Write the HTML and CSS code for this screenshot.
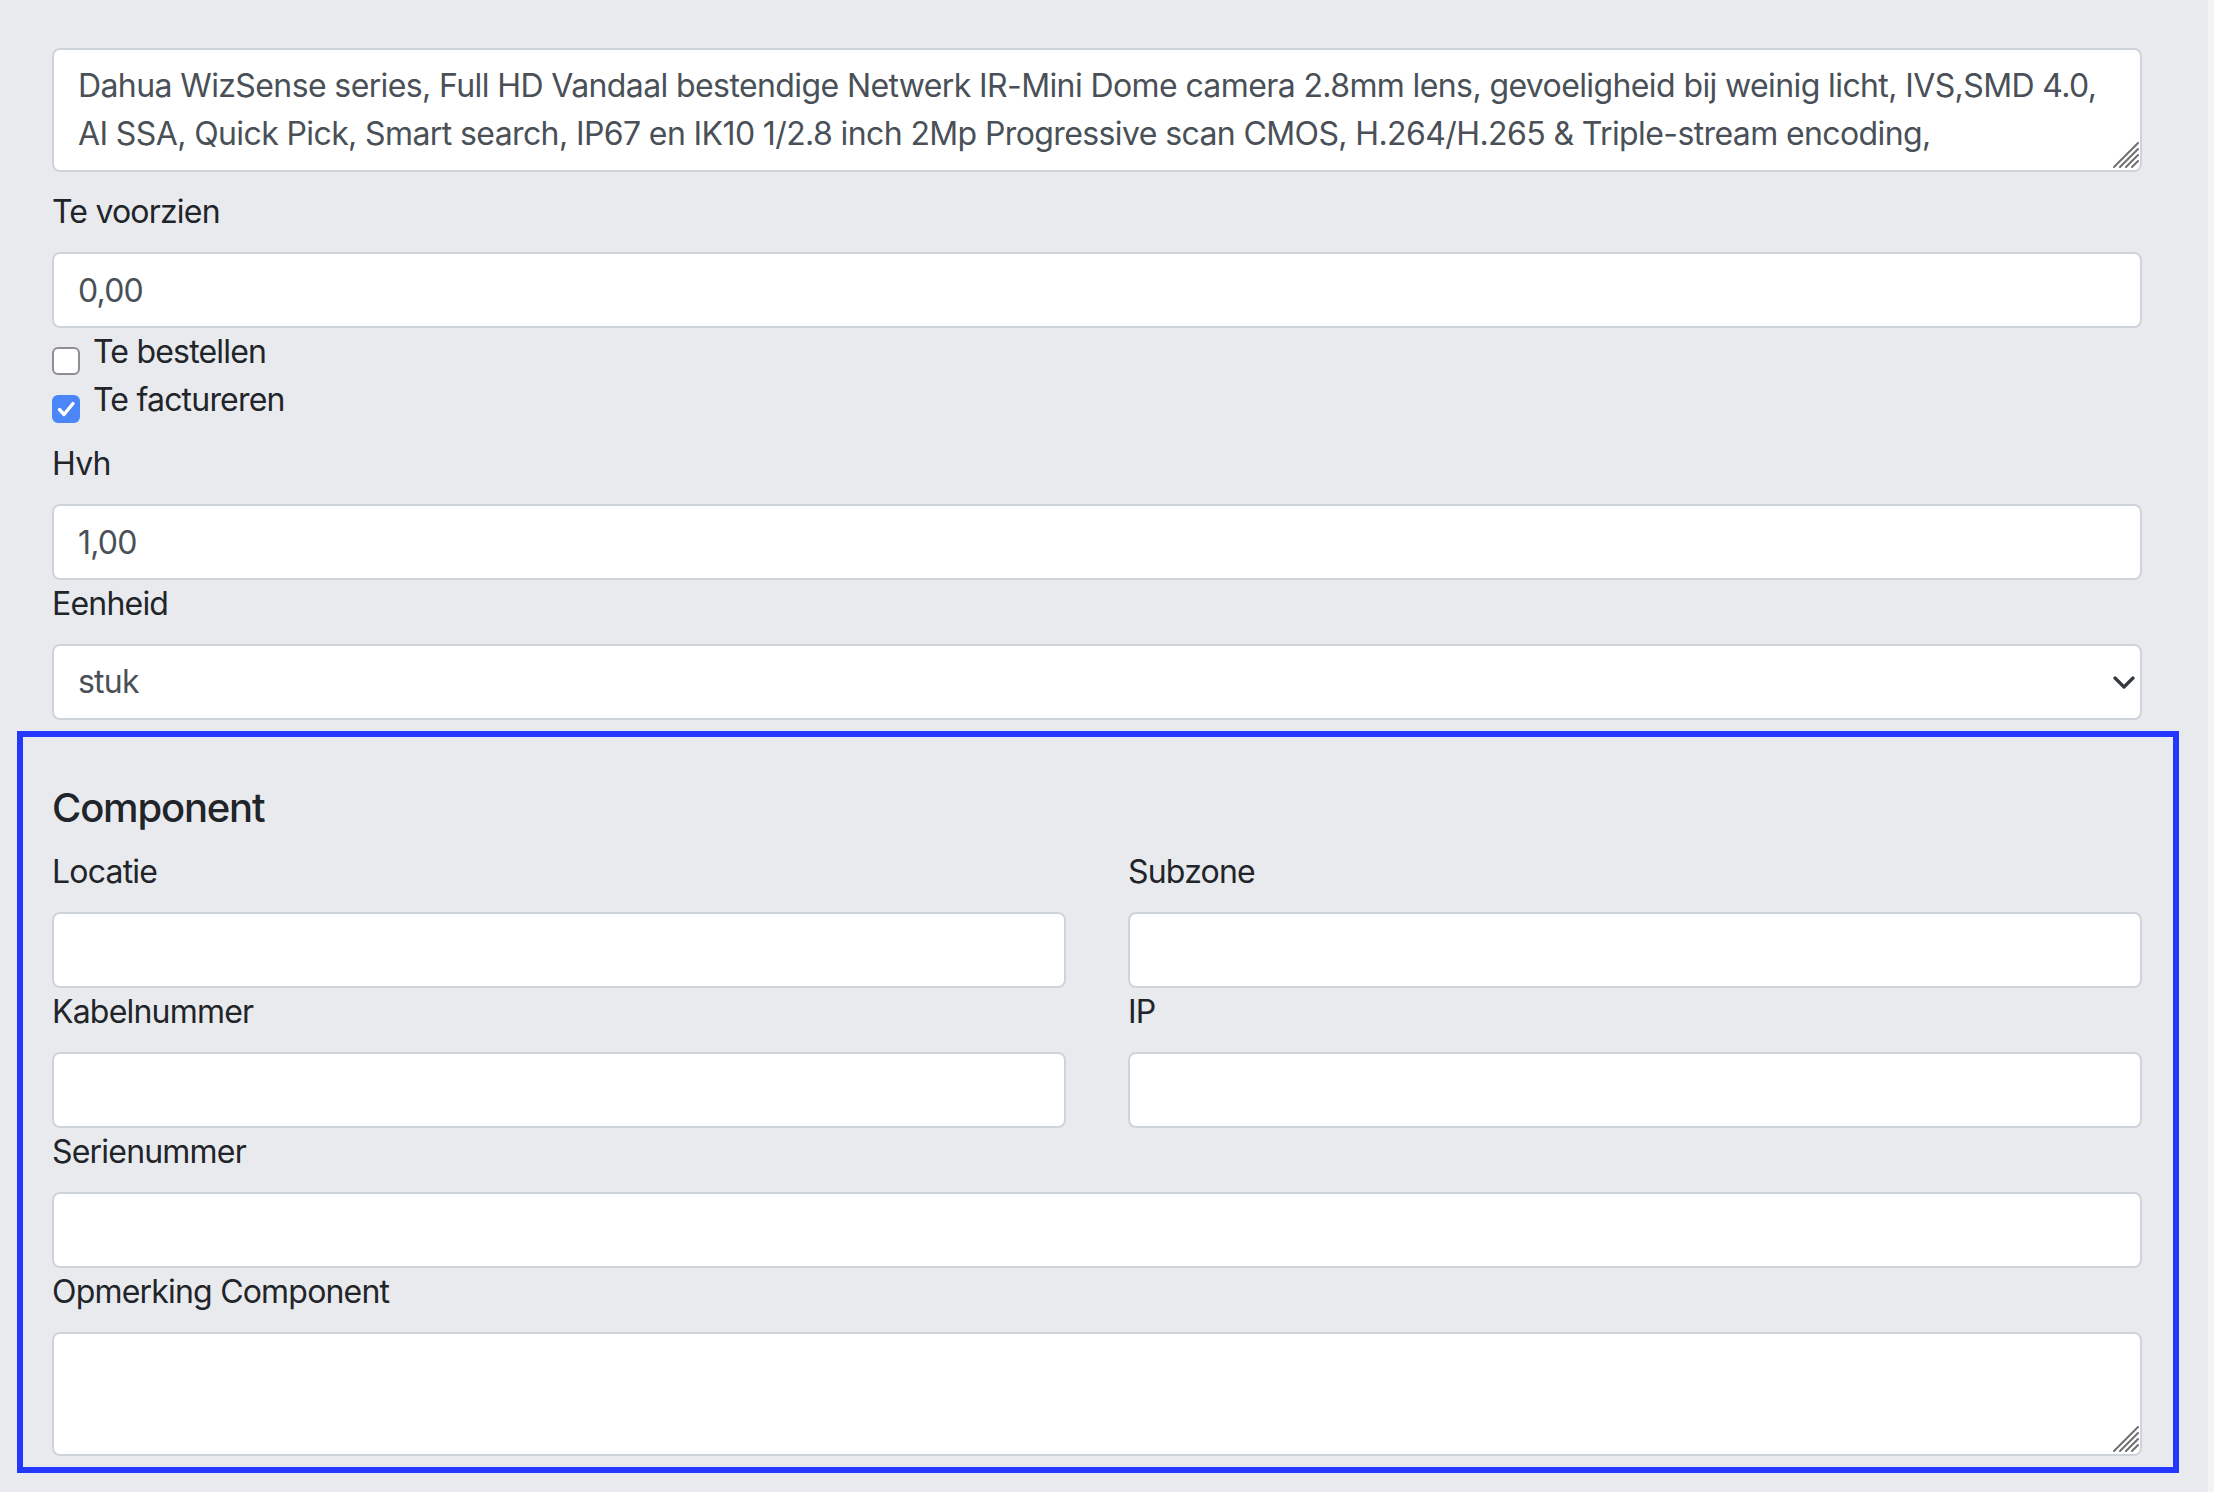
FILE: index.html
```html
<!DOCTYPE html>
<html lang="nl">
<head>
    <meta charset="UTF-8">
    <meta name="viewport" content="width=device-width, initial-scale=1.0">
    <title>Artikel bewerken</title>
    <link rel="stylesheet" href="styles.css">
</head>
<body>
    <div class="page">
        <form class="item-form">
            <div class="fields">
                <div class="textarea-wrap description">
                    <textarea class="form-control" rows="2">Dahua WizSense series, Full HD Vandaal bestendige Netwerk IR-Mini Dome camera 2.8mm lens, gevoeligheid bij weinig licht, IVS,SMD 4.0, AI SSA, Quick Pick, Smart search, IP67 en IK10 1/2.8 inch 2Mp Progressive scan CMOS, H.264/H.265 &amp; Triple-stream encoding,</textarea>
                    <svg class="grip" viewBox="0 0 26 26" width="26" height="26"><path d="M1 25L25 1M7 25L25 7M13 25L25 13M19 25L25 19" stroke="#707070" stroke-width="2" stroke-linecap="round"/></svg>
                </div>

                <label class="form-label" for="te-voorzien">Te voorzien</label>
                <input class="form-control" id="te-voorzien" type="text" value="0,00">

                <div class="checks">
                    <label class="form-check">
                        <input type="checkbox" class="check-input">
                        <span class="check-box"></span>
                        <span>Te bestellen</span>
                    </label>
                    <label class="form-check">
                        <input type="checkbox" class="check-input" checked>
                        <span class="check-box">
                            <svg viewBox="0 0 28 28" width="28" height="28"><path d="M7.5 14.5l4.5 5 9-11" fill="none" stroke="#fff" stroke-width="3.4" stroke-linecap="round" stroke-linejoin="round"/></svg>
                        </span>
                        <span>Te factureren</span>
                    </label>
                </div>

                <label class="form-label" for="hvh">Hvh</label>
                <input class="form-control" id="hvh" type="text" value="1,00">

                <label class="form-label" for="eenheid">Eenheid</label>
                <div class="select-wrap">
                    <select class="form-control form-select" id="eenheid">
                        <option selected>stuk</option>
                        <option>meter</option>
                        <option>uur</option>
                    </select>
                    <svg class="chevron" viewBox="0 0 24 14" width="24" height="14"><path d="M3 3l9 9 9-9" fill="none" stroke="#343a40" stroke-width="3.2" stroke-linecap="round" stroke-linejoin="round"/></svg>
                </div>
            </div>

            <fieldset class="component">
                <h5 class="component-title">Component</h5>
                <div class="component-grid">
                    <div class="col">
                        <label class="form-label" for="locatie">Locatie</label>
                        <input class="form-control" id="locatie" type="text">
                    </div>
                    <div class="col">
                        <label class="form-label" for="subzone">Subzone</label>
                        <input class="form-control" id="subzone" type="text">
                    </div>
                    <div class="col">
                        <label class="form-label" for="kabelnummer">Kabelnummer</label>
                        <input class="form-control" id="kabelnummer" type="text">
                    </div>
                    <div class="col">
                        <label class="form-label" for="ip">IP</label>
                        <input class="form-control" id="ip" type="text">
                    </div>
                </div>
                <label class="form-label" for="serienummer">Serienummer</label>
                <input class="form-control" id="serienummer" type="text">

                <label class="form-label" for="opmerking">Opmerking Component</label>
                <div class="textarea-wrap">
                    <textarea class="form-control" id="opmerking" rows="2"></textarea>
                    <svg class="grip" viewBox="0 0 26 26" width="26" height="26"><path d="M1 25L25 1M7 25L25 7M13 25L25 13M19 25L25 19" stroke="#707070" stroke-width="2" stroke-linecap="round"/></svg>
                </div>
            </fieldset>
        </form>
    </div>
</body>
</html>
```

FILE: styles.css
```css
* {
    margin: 0;
    padding: 0;
    box-sizing: border-box;
}

body {
    background-color: #e9eaee;
    color: #212529;
    font-family: Inter, "Noto Sans", sans-serif;
    font-size: 32px;
    line-height: 48px;
    letter-spacing: -0.025em;
}

.page {
    padding: 48px 29px 0 17px;
    min-height: 100vh;
    border-right: 6px solid #f2f3f5;
}

.fields {
    display: flex;
    flex-direction: column;
    margin: 0 37px 0 35px;
}

.form-label {
    display: block;
    margin-bottom: 16px;
    color: #212529;
}

.form-control {
    display: block;
    width: 100%;
    height: 76px;
    padding: 12px 24px;
    font-family: inherit;
    font-size: 32px;
    line-height: 48px;
    letter-spacing: inherit;
    color: #495057;
    background-color: #fff;
    border: 2px solid #ced4da;
    border-radius: 8px;
    outline: none;
}

/* textareas get a drawn grip instead of the native one */
.textarea-wrap {
    position: relative;
}

textarea.form-control {
    height: 124px;
    overflow: hidden;
    resize: none;
    letter-spacing: -0.019em;
}

.grip {
    position: absolute;
    right: 3px;
    bottom: 4px;
    pointer-events: none;
}

.description {
    margin-bottom: 16px;
}

/* checkbox rows */
.checks {
    display: flex;
    flex-direction: column;
    margin-bottom: 16px;
}

.form-check {
    display: flex;
    align-items: flex-start;
    height: 48px;
    cursor: pointer;
}

.check-input {
    position: absolute;
    opacity: 0;
    pointer-events: none;
}

.check-box {
    flex: 0 0 auto;
    width: 28px;
    height: 28px;
    margin: 19px 13px 0 0;
    background: #fff;
    border: 2px solid #8e8e93;
    border-radius: 6px;
}

.check-box svg {
    display: block;
    margin: -2px;
}

.check-input:checked + .check-box {
    background: #4a86f7;
    border-color: #4a86f7;
}

/* select with chevron */
.select-wrap {
    position: relative;
    margin-bottom: 11px;
}

.form-select {
    appearance: none;
    -webkit-appearance: none;
    padding-right: 64px;
}

.chevron {
    position: absolute;
    top: 31px;
    right: 6px;
    pointer-events: none;
}

/* component block */
.component {
    border: 6px solid #2337ff;
    padding: 47px 31px 11px 29px;
    min-width: 0;
}

.component-title {
    font-size: 40px;
    line-height: 48px;
    font-weight: 500;
    letter-spacing: -0.03em;
    color: #212529;
    margin-bottom: 16px;
}

.component-grid {
    display: grid;
    grid-template-columns: 1fr 1fr;
    column-gap: 62px;
}
```
